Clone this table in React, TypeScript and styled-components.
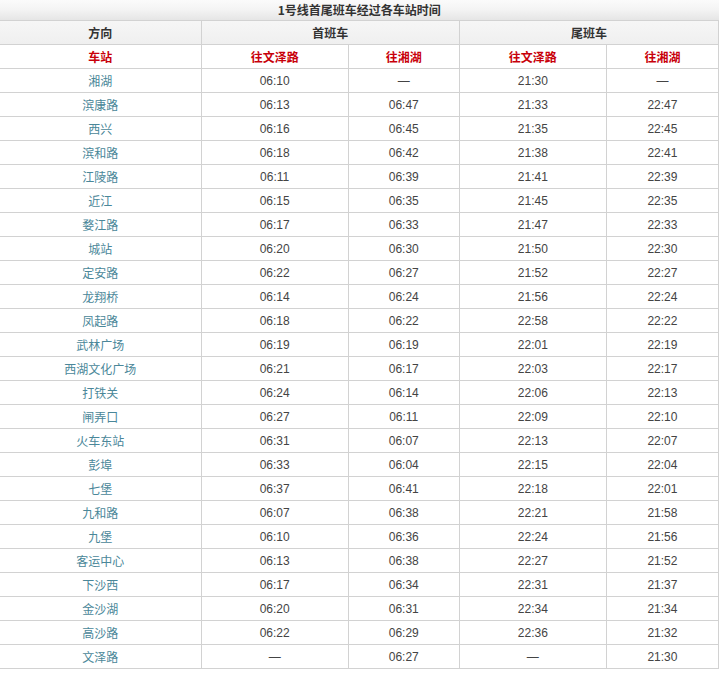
import React from 'react'
import styled, { createGlobalStyle } from 'styled-components'

const GlobalStyle = createGlobalStyle`
  html, body {
    margin: 0;
    padding: 0;
    background: #fff;
  }
  body {
    font-family: "Liberation Sans", "Noto Sans CJK SC", sans-serif;
  }
`

type Row = [string, string, string, string, string]

const rows: Row[] = [
  ['湘湖', '06:10', '—', '21:30', '—'],
  ['滨康路', '06:13', '06:47', '21:33', '22:47'],
  ['西兴', '06:16', '06:45', '21:35', '22:45'],
  ['滨和路', '06:18', '06:42', '21:38', '22:41'],
  ['江陵路', '06:11', '06:39', '21:41', '22:39'],
  ['近江', '06:15', '06:35', '21:45', '22:35'],
  ['婺江路', '06:17', '06:33', '21:47', '22:33'],
  ['城站', '06:20', '06:30', '21:50', '22:30'],
  ['定安路', '06:22', '06:27', '21:52', '22:27'],
  ['龙翔桥', '06:14', '06:24', '21:56', '22:24'],
  ['凤起路', '06:18', '06:22', '22:58', '22:22'],
  ['武林广场', '06:19', '06:19', '22:01', '22:19'],
  ['西湖文化广场', '06:21', '06:17', '22:03', '22:17'],
  ['打铁关', '06:24', '06:14', '22:06', '22:13'],
  ['闸弄口', '06:27', '06:11', '22:09', '22:10'],
  ['火车东站', '06:31', '06:07', '22:13', '22:07'],
  ['彭埠', '06:33', '06:04', '22:15', '22:04'],
  ['七堡', '06:37', '06:41', '22:18', '22:01'],
  ['九和路', '06:07', '06:38', '22:21', '21:58'],
  ['九堡', '06:10', '06:36', '22:24', '21:56'],
  ['客运中心', '06:13', '06:38', '22:27', '21:52'],
  ['下沙西', '06:17', '06:34', '22:31', '21:37'],
  ['金沙湖', '06:20', '06:31', '22:34', '21:34'],
  ['高沙路', '06:22', '06:29', '22:36', '21:32'],
  ['文泽路', '—', '06:27', '—', '21:30'],
]

const colWidths = [201, 147, 111, 147, 112]

export default function App() {
  return <>
    <GlobalStyle />
    <Table>
      <colgroup>
        {colWidths.map((w, i) => <col key={i} style={{ width: w }} />)}
      </colgroup>
      <tbody>
        <TitleRow>
          <TitleCell colSpan={5}>1号线首尾班车经过各车站时间</TitleCell>
        </TitleRow>
        <HeadRow>
          <HeadCell>方向</HeadCell>
          <HeadCell colSpan={2}>首班车</HeadCell>
          <HeadCell colSpan={2}>尾班车</HeadCell>
        </HeadRow>
        <tr>
          <SubCell>车站</SubCell>
          <SubCell>往文泽路</SubCell>
          <SubCell>往湘湖</SubCell>
          <SubCell>往文泽路</SubCell>
          <SubCell>往湘湖</SubCell>
        </tr>
        {rows.map(r => (
          <tr key={r[0]}>
            <Station>{r[0]}</Station>
            {r.slice(1).map((t, i) => <Time key={i}>{t}</Time>)}
          </tr>
        ))}
      </tbody>
    </Table>
  </>
}

const Table = styled.table`
  border-collapse: collapse;
  table-layout: fixed;
  width: 719px;
  font-size: 12px;
  td {
    border: 1px solid #d2d2d2;
    padding: 0;
    height: 23px;
    text-align: center;
    vertical-align: middle;
    line-height: 14px;
  }
`

const TitleRow = styled.tr`
  background: linear-gradient(#fbfbfb, #f4f4f4 45%, #e4e4e4);
`

const TitleCell = styled.td`
  && {
    height: 20px;
    border-top: none;
    border-left: none;
    border-right: none;
  }
  font-family: "Noto Sans CJK SC", sans-serif;
  font-weight: 700;
  color: #333;
  font-size: 12px;
`

const HeadRow = styled.tr`
  background: linear-gradient(#f6f6f6, #efefef);
`

const HeadCell = styled.td`
  font-family: "Noto Sans CJK SC", sans-serif;
  font-weight: 700;
  color: #333;
  &:first-child { border-left: none; }
`

const SubCell = styled.td`
  font-family: "Noto Sans CJK SC", sans-serif;
  font-weight: 700;
  color: #c8000a;
  &:first-child { border-left: none; }
`

const Station = styled.td`
  font-family: "Noto Sans CJK SC", sans-serif;
  color: #4a8799;
  && { border-left: none; }
`

const Time = styled.td`
  font-family: "Liberation Sans", Arial, sans-serif;
  color: #444;
`
